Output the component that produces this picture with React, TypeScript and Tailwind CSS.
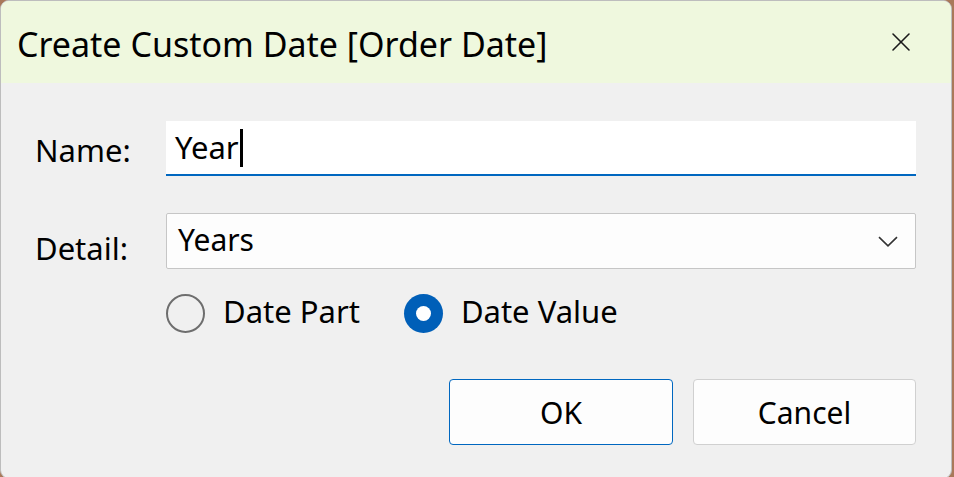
import { X } from 'lucide-react'

const font = { fontFamily: '"Segoe UI", "Noto Sans", "Open Sans", sans-serif' }

function Radio({ label, checked }: { label: string; checked?: boolean }) {
  return (
    <label className="flex items-center gap-[18px]">
      {checked ? (
        <span className="flex h-[39px] w-[39px] items-center justify-center rounded-full bg-[#005fb8]">
          <span className="h-[15px] w-[15px] rounded-full bg-white" />
        </span>
      ) : (
        <span className="h-[39px] w-[39px] rounded-full border-2 border-[#6e6e6e]" />
      )}
      <span className="pb-[4px] text-[31px] leading-none text-black">{label}</span>
    </label>
  )
}

export default function App() {
  return (
    <div className="h-[477px] w-[954px] overflow-hidden bg-[#a9795a]" style={font}>
      <div className="flex h-[479px] w-[952px] flex-col overflow-hidden rounded-[9px] border border-[#bdbdbd] bg-[#f0f0f0]">
        {/* Title bar */}
        <div className="flex h-[82px] shrink-0 items-center justify-between bg-[#eff8de] pl-[16px] pr-[34px]">
          <h1 className="pt-[4px] text-[34px] leading-none font-normal text-black">
            Create Custom Date [Order Date]
          </h1>
          <X className="h-[32px] w-[32px] text-[#1a1a1a]" strokeWidth={1.2} />
        </div>

        {/* Form */}
        <div className="flex flex-col pl-[34px] pr-[35px] pt-[38px]">
          <div className="flex items-center">
            <span className="w-[131px] pt-[4px] text-[31px] leading-none text-black">Name:</span>
            <div className="flex h-[55px] flex-1 items-center border-b-2 border-[#0067c0] bg-white pl-[9px]">
              <span className="text-[31px] leading-none text-black">Year</span>
              <span className="ml-[1px] h-[38px] w-[3px] bg-black" />
            </div>
          </div>

          <div className="mt-[37px] flex items-center">
            <span className="w-[131px] pt-[14px] text-[31px] leading-none text-black">Detail:</span>
            <div className="flex h-[56px] flex-1 items-center justify-between rounded-[2px] border border-[#c6c6c6] bg-[#fdfdfd] pl-[11px] pr-[17px]">
              <span className="pb-[3px] text-[30px] leading-none text-black">Years</span>
              <svg width="20" height="11" viewBox="0 0 20 11" fill="none">
                <path d="M1 1.2 L10 9.8 L19 1.2" stroke="#333" strokeWidth="1.6" />
              </svg>
            </div>
          </div>

          <div className="mt-[25px] ml-[131px] flex items-center gap-[44px]">
            <Radio label="Date Part" />
            <Radio label="Date Value" checked />
          </div>

          <div className="mt-[46px] flex justify-end gap-[20px]">
            <button className="h-[66px] w-[224px] rounded-[4px] border border-[#0067c0] bg-[#fdfdfd] text-[30px] text-black">
              OK
            </button>
            <button className="h-[66px] w-[223px] rounded-[4px] border border-[#d0d0d0] bg-[#fdfdfd] text-[30px] text-black">
              Cancel
            </button>
          </div>
        </div>
      </div>
    </div>
  )
}
